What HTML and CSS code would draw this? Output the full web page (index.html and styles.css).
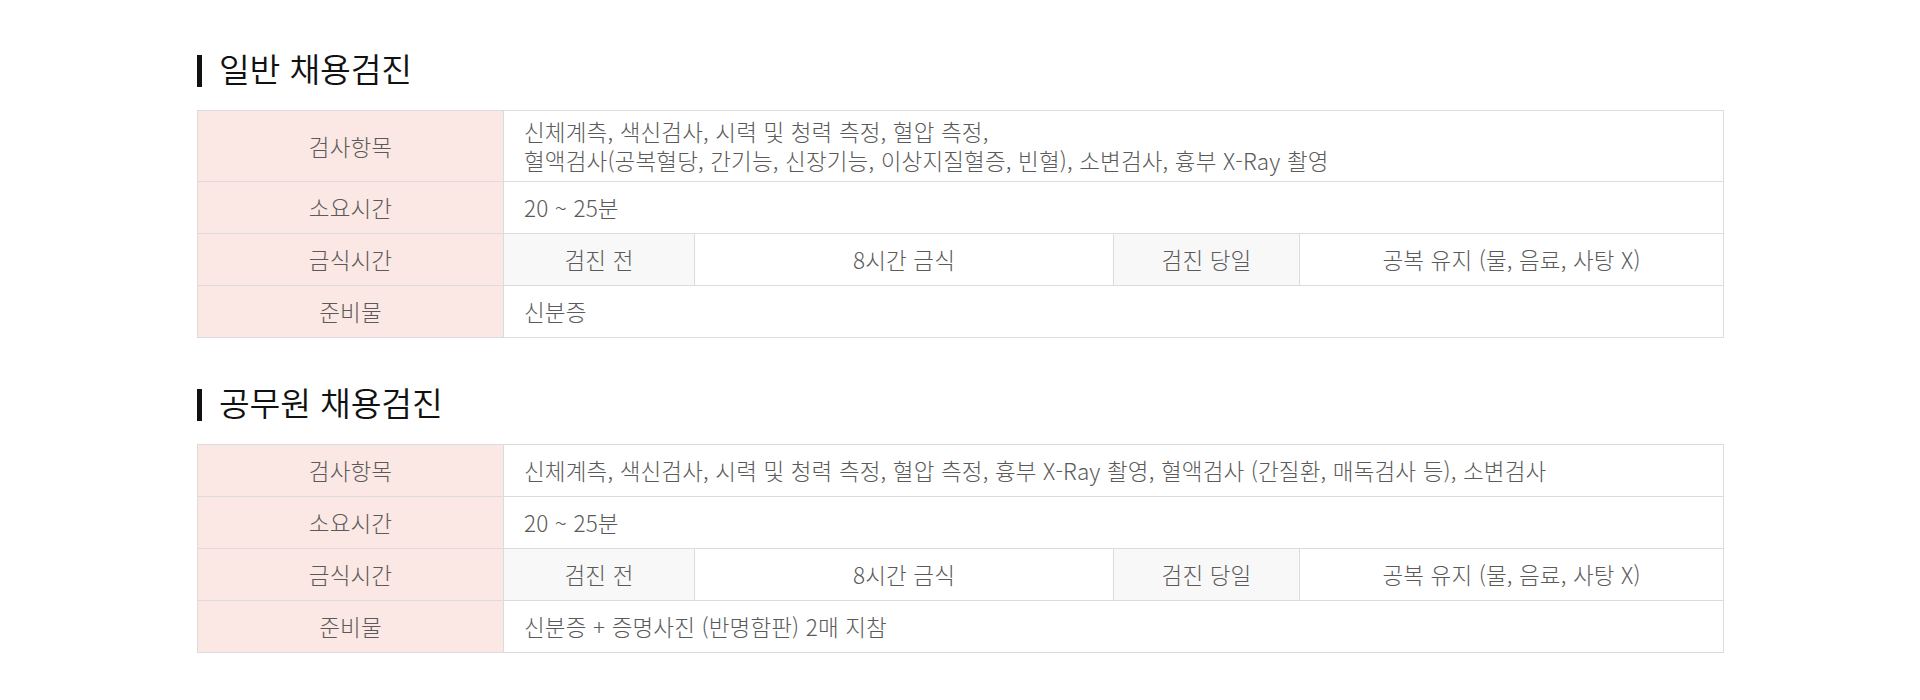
FILE: index.html
```html
<!DOCTYPE html>
<html lang="ko">
<head>
<meta charset="utf-8">
<title>채용검진</title>
<link rel="stylesheet" href="styles.css">
</head>
<body>
<div class="wrap">
  <section class="section">
    <h2 class="title">일반 채용검진</h2>
    <table class="info">
      <colgroup>
        <col class="c-label"><col class="c-a"><col class="c-b"><col class="c-c"><col class="c-d">
      </colgroup>
      <tbody>
        <tr class="tall">
          <th>검사항목</th>
          <td colspan="4">신체계측, 색신검사, 시력 및 청력 측정, 혈압 측정,<br>혈액검사(공복혈당, 간기능, 신장기능, 이상지질혈증, 빈혈), 소변검사, 흉부 X-Ray 촬영</td>
        </tr>
        <tr>
          <th>소요시간</th>
          <td colspan="4">20 ~ 25분</td>
        </tr>
        <tr>
          <th>금식시간</th>
          <td class="sub">검진 전</td>
          <td class="center">8시간 금식</td>
          <td class="sub">검진 당일</td>
          <td class="center">공복 유지 (물, 음료, 사탕 X)</td>
        </tr>
        <tr>
          <th>준비물</th>
          <td colspan="4">신분증</td>
        </tr>
      </tbody>
    </table>
  </section>

  <section class="section">
    <h2 class="title">공무원 채용검진</h2>
    <table class="info">
      <colgroup>
        <col class="c-label"><col class="c-a"><col class="c-b"><col class="c-c"><col class="c-d">
      </colgroup>
      <tbody>
        <tr>
          <th>검사항목</th>
          <td colspan="4">신체계측, 색신검사, 시력 및 청력 측정, 혈압 측정, 흉부 X-Ray 촬영, 혈액검사 (간질환, 매독검사 등), 소변검사</td>
        </tr>
        <tr>
          <th>소요시간</th>
          <td colspan="4">20 ~ 25분</td>
        </tr>
        <tr>
          <th>금식시간</th>
          <td class="sub">검진 전</td>
          <td class="center">8시간 금식</td>
          <td class="sub">검진 당일</td>
          <td class="center">공복 유지 (물, 음료, 사탕 X)</td>
        </tr>
        <tr>
          <th>준비물</th>
          <td colspan="4">신분증 + 증명사진 (반명함판) 2매 지참</td>
        </tr>
      </tbody>
    </table>
  </section>
</div>
</body>
</html>
```

FILE: styles.css
```css
* { box-sizing: border-box; }

html, body {
  margin: 0;
  padding: 0;
  background: #ffffff;
}

body {
  font-family: "Noto Sans CJK KR", "Noto Sans", sans-serif;
  color: #555555;
}

.wrap {
  width: 1526px;
  margin: 0 auto;
  padding-top: 48px;
}

.section + .section {
  margin-top: 44px;
}

.title {
  display: flex;
  align-items: center;
  gap: 17px;
  margin: 0 0 22px;
  height: 40px;
  font-size: 33.5px;
  font-weight: 350;
  line-height: 40px;
  color: #111111;
  letter-spacing: -0.2px;
}

.title::before {
  content: "";
  display: block;
  width: 5px;
  height: 32px;
  margin-top: 6px;
  background: #111111;
}

.info {
  width: 100%;
  border-collapse: collapse;
  table-layout: fixed;
  font-size: 22.5px;
  font-weight: 300;
  line-height: 29px;
  letter-spacing: 0.15px;
}

.c-label { width: 306px; }
.c-a { width: 191px; }
.c-b { width: 419px; }
.c-c { width: 186px; }
.c-d { width: 424px; }

.info tr { height: 52px; }

.info th,
.info td {
  border: 1px solid #dcdcdc;
  padding: 6px 20px;
  vertical-align: middle;
  font-weight: 300;
}

.info th {
  background: #fbe8e4;
  text-align: center;
  color: #5a5a5a;
}

.info td {
  text-align: left;
  color: #5a5a5a;
}

.info td.sub {
  background: #f8f8f8;
  text-align: center;
}

.info td.center {
  text-align: center;
}
```
